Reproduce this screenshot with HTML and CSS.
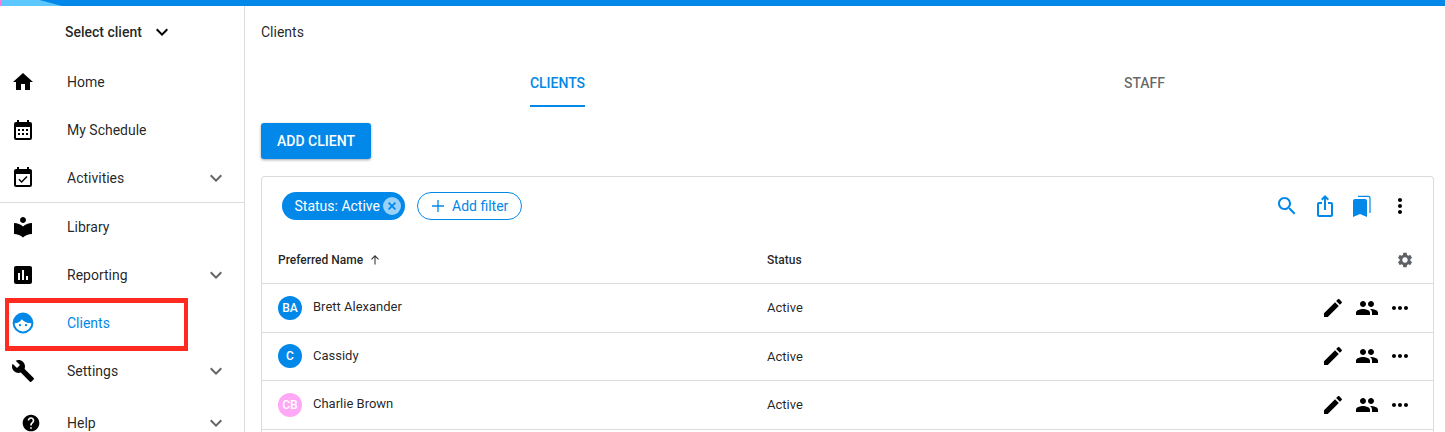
FILE: index.html
```html
<!DOCTYPE html>
<html lang="en">
<head>
<meta charset="utf-8">
<title>Clients</title>
<link rel="stylesheet" href="styles.css">
</head>
<body>
<svg class="defs" width="0" height="0" aria-hidden="true">
  <symbol id="i-home" viewBox="0 0 24 24"><path d="M10 20v-6h4v6h5v-8h3L12 3 2 12h3v8z"/></symbol>
  <symbol id="i-cal" viewBox="0 0 24 24"><path fill-rule="evenodd" d="M19 4h-1V2h-2v2H8V2H6v2H5a2 2 0 0 0-2 2v14a2 2 0 0 0 2 2h14a2 2 0 0 0 2-2V6a2 2 0 0 0-2-2zM5 9h14v11H5zM7 11v2h2v-2zM11 11v2h2v-2zM15 11v2h2v-2zM7 15v2h2v-2zM11 15v2h2v-2zM15 15v2h2v-2z"/><path d="M7 11h2v2H7zM11 11h2v2h-2zM15 11h2v2h-2zM7 15h2v2H7zM11 15h2v2h-2zM15 15h2v2h-2z" fill="#000"/></symbol>
  <symbol id="i-check" viewBox="0 0 24 24"><path d="M16.53 11.06L15.47 10l-4.88 4.88-2.12-2.12-1.06 1.06L10.59 17l5.94-5.94zM19 3h-1V1h-2v2H8V1H6v2H5c-1.11 0-1.99.9-1.99 2L3 19c0 1.1.89 2 2 2h14c1.1 0 2-.9 2-2V5c0-1.1-.9-2-2-2zm0 16H5V8h14v11z"/></symbol>
  <symbol id="i-lib" viewBox="0 0 24 24"><path d="M12 11.55C9.64 9.35 6.48 8 3 8v11c3.48 0 6.64 1.35 9 3.55 2.36-2.19 5.52-3.55 9-3.55V8c-3.48 0-6.64 1.35-9 3.55zM12 8c1.66 0 3-1.34 3-3s-1.34-3-3-3-3 1.34-3 3 1.34 3 3 3z"/></symbol>
  <symbol id="i-chart" viewBox="0 0 24 24"><path d="M19 3H5c-1.1 0-2 .9-2 2v14c0 1.1.9 2 2 2h14c1.1 0 2-.9 2-2V5c0-1.1-.9-2-2-2zM9 17H7v-7h2v7zm4 0h-2V7h2v10zm4 0h-2v-4h2v4z"/></symbol>
  <symbol id="i-face" viewBox="0 0 24 24"><path fill-rule="evenodd" d="M12 1.6a10.4 10.4 0 1 0 0 20.8 10.4 10.4 0 0 0 0-20.8zm0 18.8a8.4 8.4 0 0 1-8.4-8.2c3.2-.2 5.6-1.4 7.2-4 1.8 2.4 4.8 3.8 9.6 4a8.4 8.4 0 0 1-8.4 8.2z"/><circle cx="9" cy="14.2" r="1.15"/><circle cx="15" cy="14.2" r="1.15"/></symbol>
  <symbol id="i-wrench" viewBox="0 0 24 24"><path d="M22.7 19l-9.1-9.1c.9-2.3.4-5-1.5-6.9-2-2-5-2.4-7.4-1.3L9 6 6 9 1.6 4.7C.4 7.1.9 10.1 2.9 12.1c1.9 1.9 4.6 2.4 6.9 1.5l9.1 9.1c.4.4 1 .4 1.4 0l2.3-2.3c.5-.4.5-1.1.1-1.4z"/></symbol>
  <symbol id="i-help" viewBox="0 0 24 24"><path d="M12 2C6.48 2 2 6.48 2 12s4.48 10 10 10 10-4.48 10-10S17.52 2 12 2zm1 17h-2v-2h2v2zm2.07-7.75l-.9.92C13.45 12.9 13 13.5 13 15h-2v-.5c0-1.1.45-2.1 1.17-2.83l1.24-1.26c.37-.36.59-.86.59-1.41 0-1.1-.9-2-2-2s-2 .9-2 2H8c0-2.21 1.79-4 4-4s4 1.79 4 4c0 .88-.36 1.68-.93 2.25z"/></symbol>
  <symbol id="i-down" viewBox="0 0 24 24"><path d="M16.59 8.59L12 13.17 7.41 8.59 6 10l6 6 6-6z"/></symbol>
  <symbol id="i-search" viewBox="0 0 24 24"><path d="M15.5 14h-.79l-.28-.27C15.41 12.59 16 11.11 16 9.5 16 5.91 13.09 3 9.5 3S3 5.91 3 9.5 5.91 16 9.5 16c1.61 0 3.09-.59 4.23-1.57l.27.28v.79l5 4.99L20.49 19l-4.99-5zm-6 0C7.01 14 5 11.99 5 9.5S7.01 5 9.5 5 14 7.01 14 9.5 11.99 14 9.5 14z"/></symbol>
  <symbol id="i-share" viewBox="0 0 24 24"><path d="M16 5l-1.42 1.42-1.59-1.59V16h-1.98V4.83L9.42 6.42 8 5l4-4 4 4zm4 5v11c0 1.1-.9 2-2 2H6c-1.11 0-2-.9-2-2V10c0-1.11.89-2 2-2h3v2H6v11h12V10h-3V8h3c1.1 0 2 .89 2 2z"/></symbol>
  <symbol id="i-marks" viewBox="0 0 24 24"><path d="M8 2.4h10.5A1.5 1.5 0 0 1 20 3.9V19" fill="none" stroke="#0288e8" stroke-width="1.2"/><path d="M5 5h10a2 2 0 0 1 2 2v16l-7-3-7 3V7a2 2 0 0 1 2-2z"/></symbol>
  <symbol id="i-vert" viewBox="0 0 24 24"><path d="M12 8c1.1 0 2-.9 2-2s-.9-2-2-2-2 .9-2 2 .9 2 2 2zm0 2c-1.1 0-2 .9-2 2s.9 2 2 2 2-.9 2-2-.9-2-2-2zm0 6c-1.1 0-2 .9-2 2s.9 2 2 2 2-.9 2-2-.9-2-2-2z"/></symbol>
  <symbol id="i-horiz" viewBox="0 0 24 24"><path d="M6 10c-1.1 0-2 .9-2 2s.9 2 2 2 2-.9 2-2-.9-2-2-2zm12 0c-1.1 0-2 .9-2 2s.9 2 2 2 2-.9 2-2-.9-2-2-2zm-6 0c-1.1 0-2 .9-2 2s.9 2 2 2 2-.9 2-2-.9-2-2-2z"/></symbol>
  <symbol id="i-edit" viewBox="0 0 24 24"><path d="M3 17.25V21h3.75L17.81 9.94l-3.75-3.75L3 17.25zM20.71 7.04c.39-.39.39-1.02 0-1.41l-2.34-2.34c-.39-.39-1.02-.39-1.41 0l-1.83 1.83 3.75 3.75 1.83-1.83z"/></symbol>
  <symbol id="i-people" viewBox="0 0 24 24"><path d="M16 11c1.66 0 2.99-1.34 2.99-3S17.66 5 16 5c-1.66 0-3 1.34-3 3s1.34 3 3 3zm-8 0c1.66 0 2.99-1.34 2.99-3S9.66 5 8 5C6.34 5 5 6.34 5 8s1.34 3 3 3zm0 2c-2.33 0-7 1.17-7 3.5V19h14v-2.5c0-2.33-4.67-3.5-7-3.5zm8 0c-.29 0-.62.02-.97.05 1.16.84 1.97 1.97 1.97 3.45V19h6v-2.5c0-2.33-4.67-3.5-7-3.5z"/></symbol>
  <symbol id="i-gear" viewBox="0 0 24 24"><path d="M19.14 12.94c.04-.3.06-.61.06-.94 0-.32-.02-.64-.07-.94l2.03-1.58c.18-.14.23-.41.12-.61l-1.92-3.32c-.12-.22-.37-.29-.59-.22l-2.39.96c-.5-.38-1.03-.7-1.62-.94l-.36-2.54c-.04-.24-.24-.41-.48-.41h-3.84c-.24 0-.43.17-.47.41l-.36 2.54c-.59.24-1.13.57-1.62.94l-2.39-.96c-.22-.08-.47 0-.59.22L2.74 8.87c-.12.21-.08.47.12.61l2.03 1.58c-.05.3-.09.63-.09.94s.02.64.07.94l-2.03 1.58c-.18.14-.23.41-.12.61l1.92 3.32c.12.22.37.29.59.22l2.39-.96c.5.38 1.03.7 1.62.94l.36 2.54c.05.24.24.41.48.41h3.84c.24 0 .44-.17.47-.41l.36-2.54c.59-.24 1.13-.56 1.62-.94l2.39.96c.22.08.47 0 .59-.22l1.92-3.32c.12-.22.07-.47-.12-.61l-2.01-1.58zM12 15.6c-1.98 0-3.6-1.62-3.6-3.6s1.62-3.6 3.6-3.6 3.6 1.62 3.6 3.6-1.62 3.6-3.6 3.6z"/></symbol>
  <symbol id="i-arrow" viewBox="0 0 16 16"><path d="M8 13V3.5M4 7.2l4-4 4 4" fill="none" stroke="currentColor" stroke-width="1.2"/></symbol>
</svg>

<div class="topbar"></div>
<div class="app">
  <aside class="sidebar">
    <div class="client-select">
      <span>Select client</span>
      <svg class="ico ico-down-dark"><use href="#i-down"/></svg>
    </div>
    <nav class="nav">
      <a class="nav-item"><svg class="ico"><use href="#i-home"/></svg><span>Home</span></a>
      <a class="nav-item"><svg class="ico"><use href="#i-cal"/></svg><span>My Schedule</span></a>
      <a class="nav-item nav-divided"><svg class="ico"><use href="#i-check"/></svg><span>Activities</span><svg class="ico chev"><use href="#i-down"/></svg></a>
      <a class="nav-item"><svg class="ico"><use href="#i-lib"/></svg><span>Library</span></a>
      <a class="nav-item"><svg class="ico"><use href="#i-chart"/></svg><span>Reporting</span><svg class="ico chev"><use href="#i-down"/></svg></a>
      <a class="nav-item nav-active"><svg class="ico"><use href="#i-face"/></svg><span>Clients</span></a>
      <a class="nav-item"><svg class="ico"><use href="#i-wrench"/></svg><span>Settings</span><svg class="ico chev"><use href="#i-down"/></svg></a>
      <a class="nav-item nav-help"><span class="help-slot"><svg class="ico-help"><use href="#i-help"/></svg></span><span>Help</span><svg class="ico chev"><use href="#i-down"/></svg></a>
    </nav>
    <div class="highlight"></div>
  </aside>

  <main class="main">
    <div class="crumb">Clients</div>
    <div class="tabs">
      <div class="tab tab-on"><span>CLIENTS</span></div>
      <div class="tab"><span>STAFF</span></div>
    </div>
    <button class="add-btn">ADD CLIENT</button>
    <section class="card">
      <div class="toolbar">
        <div class="chip">
          <span>Status: Active</span>
          <svg class="chip-x" viewBox="0 0 18 18"><circle cx="9" cy="9" r="9" fill="#99d1f9"/><path d="M5.6 5.6l6.8 6.8M12.4 5.6l-6.8 6.8" stroke="#0288e8" stroke-width="1.8" fill="none"/></svg>
        </div>
        <div class="chip-add">
          <svg class="plus" viewBox="0 0 14 14"><path d="M7 1v12M1 7h12" stroke="#0288e8" stroke-width="1.3" fill="none"/></svg>
          <span>Add filter</span>
        </div>
        <div class="tools">
          <svg class="ico blue"><use href="#i-search"/></svg>
          <svg class="ico blue"><use href="#i-share"/></svg>
          <svg class="ico blue"><use href="#i-marks"/></svg>
          <svg class="ico"><use href="#i-vert"/></svg>
        </div>
      </div>
      <div class="row head">
        <div class="col-name"><span>Preferred Name</span><svg class="arrow"><use href="#i-arrow"/></svg></div>
        <div class="col-status">Status</div>
        <svg class="gear"><use href="#i-gear"/></svg>
      </div>
      <div class="row">
        <div class="col-name"><span class="avatar">BA</span><span class="name">Brett Alexander</span></div>
        <div class="col-status">Active</div>
        <div class="actions"><svg class="ico"><use href="#i-edit"/></svg><svg class="ico"><use href="#i-people"/></svg><svg class="ico"><use href="#i-horiz"/></svg></div>
      </div>
      <div class="row">
        <div class="col-name"><span class="avatar">C</span><span class="name">Cassidy</span></div>
        <div class="col-status">Active</div>
        <div class="actions"><svg class="ico"><use href="#i-edit"/></svg><svg class="ico"><use href="#i-people"/></svg><svg class="ico"><use href="#i-horiz"/></svg></div>
      </div>
      <div class="row">
        <div class="col-name"><span class="avatar avatar-pink">CB</span><span class="name">Charlie Brown</span></div>
        <div class="col-status">Active</div>
        <div class="actions"><svg class="ico"><use href="#i-edit"/></svg><svg class="ico"><use href="#i-people"/></svg><svg class="ico"><use href="#i-horiz"/></svg></div>
      </div>
      <div class="row-end"></div>
    </section>
  </main>
</div>
</body>
</html>
```

FILE: styles.css
```css
* { box-sizing: border-box; }
html, body { margin: 0; height: 432px; overflow: hidden; background: #fff; }
body { font-family: Roboto, "Liberation Sans", sans-serif; font-size: 14px; color: rgba(0,0,0,.87); }
.defs { position: absolute; }

.topbar { height: 6px; background: linear-gradient(100deg, #ff7ad9 0, #ff7ad9 1.5px, transparent 2.5px), linear-gradient(15deg, #5cc8ff 0, #5cc8ff 15.5px, #0288e8 16.5px); }
.app { display: flex; height: 426px; overflow: hidden; }

.ico { width: 24px; height: 24px; flex: none; fill: #000; display: block; }
.blue { fill: #0288e8; }

.sidebar { position: relative; width: 245px; flex: none; border-right: 1px solid #dcdcdc; overflow: hidden; }
.client-select { height: 52px; display: flex; align-items: center; padding-left: 65px; font-weight: 500; }
.ico-down-dark { margin-left: 8px; }
.nav-item { height: 48px; display: flex; align-items: center; padding-left: 11px; }
.nav-item > span:not(.help-slot) { margin-left: 32px; }
.chev { margin-left: auto; margin-right: 16px; fill: #666; }
.nav-divided { box-sizing: content-box; border-bottom: 1px solid #dcdcdc; }
.nav-active { color: #0288e8; }
.nav-active .ico { fill: #0288e8; }
.nav-help { margin-top: 4px; }
.help-slot { width: 24px; height: 24px; display: flex; justify-content: flex-end; align-items: center; }
.ico-help { width: 20px; height: 20px; fill: #000; flex: none; margin-right: -6px; }
.highlight { position: absolute; left: 5px; top: 292px; width: 183px; height: 53px; border-style: solid; border-color: #ff2a20; border-width: 5px 4px; pointer-events: none; }

.main { flex: 1; min-width: 0; padding: 0 11px 0 16px; overflow: hidden; }
.crumb { height: 52px; display: flex; align-items: center; }
.tabs { display: flex; height: 49px; padding-left: 3px; margin-right: -4px; }
.tab { flex: 1; display: flex; justify-content: center; font-weight: 500; color: rgba(0,0,0,.6); }
.tab span { height: 49px; padding-top: 17px; line-height: 16px; }
.tab-on { color: #0288e8; }
.tab-on span { border-bottom: 2px solid #0288e8; }
.add-btn { display: block; margin-top: 16px; width: 110px; height: 36px; border: 0; border-radius: 3px; background: #0288e8; color: #fff; font: 500 14px Roboto, sans-serif; box-shadow: 0 1px 3px rgba(0,0,0,.35); padding: 0; }

.card { margin-top: 17px; height: 256px; border: 1px solid #dcdcdc; border-bottom: 0; border-radius: 4px 4px 0 0; overflow: hidden; }
.toolbar { display: flex; align-items: center; height: 59px; padding: 0 21px 2px 20px; }
.chip { display: flex; align-items: center; width: 123px; height: 28px; border-radius: 14px; background: #0288e8; color: #fff; padding-left: 12.5px; white-space: nowrap; }
.chip-x { width: 18px; height: 18px; margin-left: 3px; flex: none; }
.chip-add { display: flex; align-items: center; width: 105px; height: 28px; margin-left: 12px; border: 1px solid #0288e8; border-radius: 14px; color: #0288e8; padding-left: 13px; white-space: nowrap; }
.plus { width: 14px; height: 14px; margin-right: 7px; flex: none; }
.tools { margin-left: auto; display: flex; gap: 13.67px; align-items: center; }

.row { display: flex; align-items: center; height: 48.5px; border-top: 1px solid #dcdcdc; padding-left: 16px; font-size: 13px; }
.head { height: 48px; border-top: 0; border-bottom: 1px solid #dcdcdc; font-size: 12px; font-weight: 500; padding-right: 19px; }
.head + .row { border-top: 0; height: 47.7px; padding-bottom: .5px; }
.row-end { border-top: 1px solid #dcdcdc; height: 3px; }
.col-name { width: 489px; display: flex; align-items: center; flex: none; }
.col-status { flex: none; }
.arrow { width: 14px; height: 14px; margin-left: 5px; color: #333; }
.gear { width: 18px; height: 18px; margin-left: auto; fill: #5f6368; }
.avatar { width: 24px; height: 24px; border-radius: 50%; background: #0288e8; color: #fff; font-size: 12px; font-weight: 500; display: flex; align-items: center; justify-content: center; flex: none; }
.avatar-pink { background: #ffa8f5; }
.name { margin: -2px 0 0 11px; }
.actions { margin-left: auto; padding-right: 21px; display: flex; gap: 9.5px; }
```
